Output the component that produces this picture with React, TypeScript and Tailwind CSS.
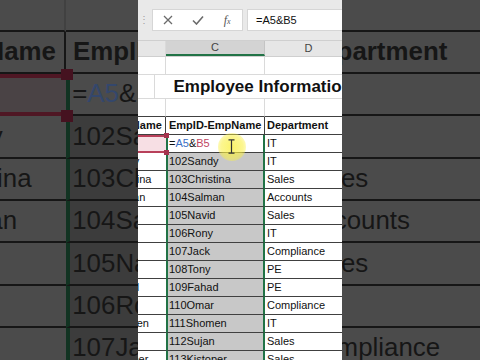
import React from 'react';

type Row = { b: string; c: string; d: string };

const rows: Row[] = [
  { b: 'Sandy', c: '102Sandy', d: 'IT' },
  { b: 'Christina', c: '103Christina', d: 'Sales' },
  { b: 'Salman', c: '104Salman', d: 'Accounts' },
  { b: 'Navid', c: '105Navid', d: 'Sales' },
  { b: 'Rony', c: '106Rony', d: 'IT' },
  { b: 'Jack', c: '107Jack', d: 'Compliance' },
  { b: 'Tony', c: '108Tony', d: 'PE' },
  { b: 'Fahad', c: '109Fahad', d: 'PE' },
  { b: 'Omar', c: '110Omar', d: 'Compliance' },
  { b: 'Shomen', c: '111Shomen', d: 'IT' },
  { b: 'Sujan', c: '112Sujan', d: 'Sales' },
  { b: 'Kistoper', c: '113Kistoper', d: 'Sales' },
];

// normal sheet colours, and the darkened ones used for the zoomed backdrop
const LIGHT = {
  sheet: 'bg-white text-[#111]',
  bar: 'bg-[#e9e9e9]',
  box: 'bg-white border-[#d6d6d6]',
  icon: '#6b6b6b',
  fx: 'text-[#555]',
  head: 'bg-[#e6e6e6] text-[#444] border-[#cfcfcf]',
  headSel: 'bg-[#d3d3d3] border-b-[#217346] border-r-[#c4c4c4]',
  grid: 'border-[#dadada]',
  gridTop: 'border-b-[#404040] border-r-[#dadada]',
  line: 'border-[#404040]',
  pink: 'bg-[#f7dfe4] border-[#b8405a]',
  corner: 'bg-[#a3344e]',
  active: 'bg-white border-b-[#404040] border-x-[#217346]',
  sel: 'bg-[#c8c8c8] border-b-[#404040] border-x-[#217346]',
  blue: 'text-[#3b6fc6]',
  red: 'text-[#c0455f]',
  glow: 'bg-[radial-gradient(circle,rgba(250,240,70,0.8)_0%,rgba(250,240,70,0.6)_55%,rgba(250,240,70,0)_100%)]',
};

const DIM = {
  sheet: 'bg-[#4b4b4b] text-[#161616]',
  bar: 'bg-[#454545]',
  box: 'bg-[#4b4b4b] border-[#404040]',
  icon: '#2a2a2a',
  fx: 'text-[#262626]',
  head: 'bg-[#454545] text-[#222] border-[#3c3c3c]',
  headSel: 'bg-[#3f3f3f] border-b-[#0f2c1e] border-r-[#3a3a3a]',
  grid: 'border-[#414141]',
  gridTop: 'border-b-[#161616] border-r-[#414141]',
  line: 'border-[#161616]',
  pink: 'bg-[#4a4345] border-[#4f1724]',
  corner: 'bg-[#451220]',
  active: 'bg-[#4b4b4b] border-b-[#161616] border-x-[#123322]',
  sel: 'bg-[#3c3c3c] border-b-[#161616] border-x-[#123322]',
  blue: 'text-[#34476c]',
  red: 'text-[#4d1c27]',
  glow: 'bg-[radial-gradient(circle,rgba(80,76,22,0.8)_0%,rgba(80,76,22,0.6)_55%,rgba(80,76,22,0)_100%)]',
};

const Cross = ({ c }: { c: string }) => (
  <svg width="10" height="10" viewBox="0 0 10 10">
    <path d="M1 1l8 8M9 1l-8 8" stroke={c} strokeWidth="1.3" />
  </svg>
);

const Check = ({ c }: { c: string }) => (
  <svg width="12" height="10" viewBox="0 0 12 10">
    <path d="M1 5.5l3.5 3.5L11 1.5" stroke={c} strokeWidth="1.6" fill="none" />
  </svg>
);

const IBeam = () => (
  <svg width="7" height="15" viewBox="0 0 7 15">
    <path d="M0.5 0.8h6M0.5 14.2h6M3.5 0.8v13.4" stroke="#333" strokeWidth="1.2" fill="none" />
  </svg>
);

function Sheet({ dim = false }: { dim?: boolean }) {
  const p = dim ? DIM : LIGHT;
  return (
    <div className={`w-[204px] h-[360px] shrink-0 overflow-hidden text-[11px] font-['Liberation_Sans',Arial,sans-serif] leading-none ${p.sheet}`}>
      {/* formula bar */}
      <div className={`h-[40px] flex items-center ${p.bar}`}>
        <span className="w-[14px] pl-[1px] text-[10px] text-[#a0a0a0]">⋮</span>
        <div className={`w-[91px] h-[22px] flex items-center border ${p.box}`}>
          <span className="w-[30px] flex justify-center">
            <Cross c={p.icon} />
          </span>
          <span className="w-[30px] flex justify-center">
            <Check c={p.icon} />
          </span>
          <span className={`w-[30px] flex justify-center items-baseline font-['Liberation_Serif',serif] italic ${p.fx}`}>
            <span className="text-[12px]">f</span>
            <span className="text-[8px]">x</span>
          </span>
        </div>
        <div className={`ml-[4px] flex-1 h-[22px] flex items-center border-y border-l pl-[8px] ${p.box}`}>=A5&amp;B5</div>
      </div>

      {/* column headers */}
      <div className={`flex -ml-[32px] w-[246px] h-[17px] border-y ${p.head}`}>
        <div className={`w-[60px] border-r ${p.grid}`} />
        <div className={`w-[99px] flex items-center justify-center border-b-2 border-r ${p.headSel}`}>C</div>
        <div className="w-[87px] flex items-center justify-center">D</div>
      </div>

      {/* rows 1-3 */}
      <div className="flex -ml-[32px] w-[246px] h-[18px]">
        <div className={`w-[60px] border-b border-r ${p.grid}`} />
        <div className={`w-[99px] border-b border-r ${p.grid}`} />
        <div className={`w-[87px] border-b ${p.grid}`} />
      </div>
      <div className="flex -ml-[32px] w-[246px] h-[24px]">
        <div className={`w-[60px] border-b border-r ${p.grid}`} />
        <div className={`flex-1 border-b flex items-center pl-[18px] font-bold text-[17px] whitespace-nowrap ${p.grid}`}>
          Employee Information
        </div>
      </div>
      <div className="flex -ml-[32px] w-[246px] h-[18px]">
        <div className={`w-[60px] border-b border-r ${p.gridTop}`} />
        <div className={`w-[99px] border-b border-r ${p.gridTop}`} />
        <div className={`w-[87px] border-b ${p.line}`} />
      </div>

      {/* table header */}
      <div className="flex -ml-[32px] w-[246px] h-[18px] font-bold">
        <div className={`w-[60px] flex items-center pl-[2px] border-b border-r whitespace-nowrap ${p.line}`}>EmpName</div>
        <div className={`w-[99px] flex items-center pl-[3px] border-b border-r whitespace-nowrap ${p.line}`}>EmpID-EmpName</div>
        <div className={`w-[87px] flex items-center pl-[2px] border-b ${p.line}`}>Department</div>
      </div>

      {/* active row 5 */}
      <div className="flex -ml-[32px] w-[246px] h-[18px]">
        <div className={`relative w-[60px] flex items-center pl-[2px] border-y-2 ${p.pink}`}>
          Rafi
          <span className={`absolute z-10 -right-[3px] -top-[4px] w-[5px] h-[5px] ${p.corner}`} />
          <span className={`absolute z-10 -right-[3px] -bottom-[4px] w-[5px] h-[5px] ${p.corner}`} />
        </div>
        <div className={`relative w-[99px] flex items-center pl-[1px] border-b border-x-2 ${p.active}`}>
          <span>=</span>
          <span className={p.blue}>A5</span>
          <span>&amp;</span>
          <span className={p.red}>B5</span>
          <span className={`absolute left-[50px] -top-[2px] w-[28px] h-[28px] rounded-full ${p.glow}`} />
          <span className="absolute left-[60px] top-[4px] flex">
            <IBeam />
          </span>
        </div>
        <div className={`w-[87px] flex items-center pl-[2px] border-b ${p.line}`}>IT</div>
      </div>

      {rows.map((r) => (
        <div key={r.c} className="flex -ml-[32px] w-[246px] h-[18px]">
          <div className={`w-[60px] flex items-center pl-[2px] border-b whitespace-nowrap ${p.line}`}>{r.b}</div>
          <div className={`w-[99px] flex items-center pl-[1px] border-b border-x-2 whitespace-nowrap ${p.sel}`}>{r.c}</div>
          <div className={`w-[87px] flex items-center pl-[2px] border-b whitespace-nowrap ${p.line}`}>{r.d}</div>
        </div>
      ))}
    </div>
  );
}

export default function App() {
  return (
    <div className="relative w-[480px] h-[360px] overflow-hidden bg-[#4a4a4a] flex justify-center">
      <div className="absolute inset-0 flex items-center justify-center overflow-hidden">
        <div className="shrink-0 [zoom:2.353]">
          <Sheet dim />
        </div>
      </div>
      <div className="relative">
        <Sheet />
      </div>
    </div>
  );
}
